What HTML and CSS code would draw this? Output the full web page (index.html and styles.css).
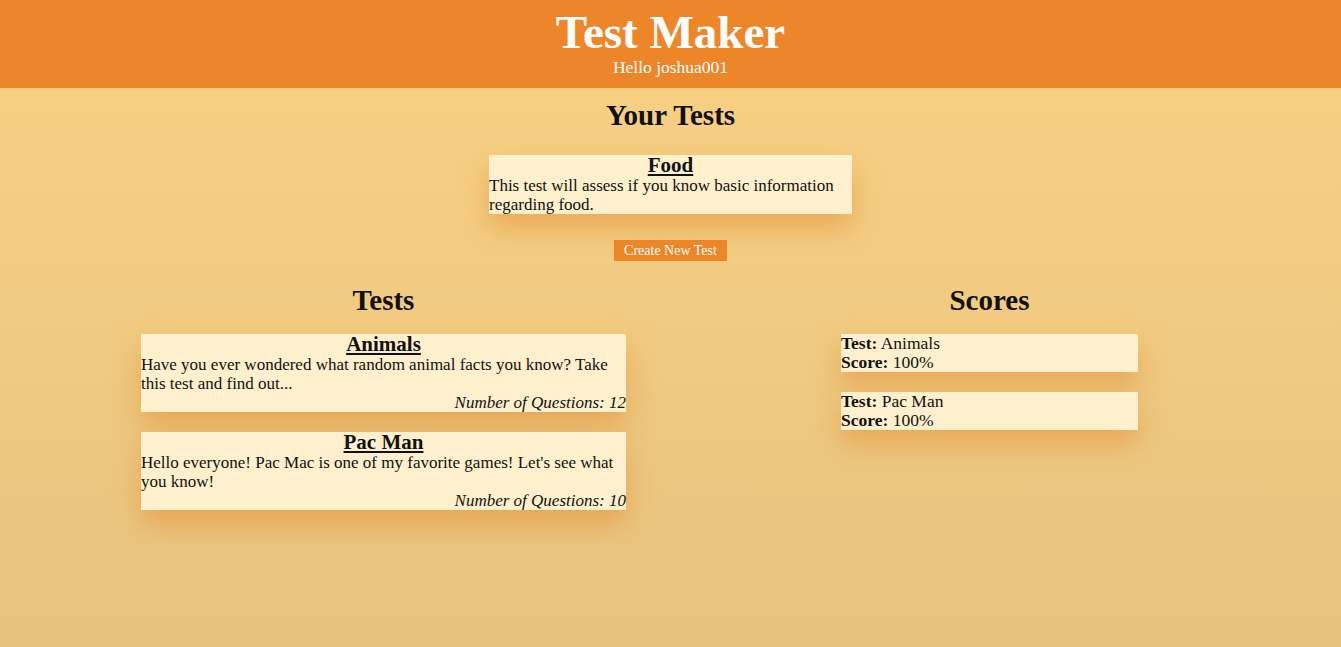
FILE: index.html
```html
<!DOCTYPE html>
<html>
<head>
<meta charset="utf-8">
<title>Test Maker</title>
<link rel="stylesheet" href="styles.css">
</head>
<body>
<header class="site-header">
  <h1 class="site-title">Test Maker</h1>
  <p class="greeting">Hello joshua001</p>
</header>
<main class="page">
  <section class="your-tests">
    <h2 class="section-title">Your Tests</h2>
    <div class="card food-card">
      <h3 class="card-title">Food</h3>
      <p class="card-text">This test will assess if you know basic information regarding food.</p>
    </div>
    <button class="create-btn">Create New Test</button>
  </section>
  <div class="columns">
    <section class="col tests-col">
      <h2 class="section-title">Tests</h2>
      <div class="card-list">
        <div class="card">
          <h3 class="card-title">Animals</h3>
          <p class="card-text">Have you ever wondered what random animal facts you know? Take this test and find out...</p>
          <p class="card-count">Number of Questions: 12</p>
        </div>
        <div class="card">
          <h3 class="card-title">Pac Man</h3>
          <p class="card-text">Hello everyone! Pac Mac is one of my favorite games! Let's see what you know!</p>
          <p class="card-count">Number of Questions: 10</p>
        </div>
      </div>
    </section>
    <section class="col scores-col">
      <h2 class="section-title">Scores</h2>
      <div class="card-list">
        <div class="card score-card">
          <p class="card-text"><b>Test:</b> Animals</p>
          <p class="card-text"><b>Score:</b> 100%</p>
        </div>
        <div class="card score-card">
          <p class="card-text"><b>Test:</b> Pac Man</p>
          <p class="card-text"><b>Score:</b> 100%</p>
        </div>
      </div>
    </section>
  </div>
</main>
</body>
</html>
```
FILE: styles.css
```css
html, body {
  margin: 0;
  padding: 0;
}
body {
  font-family: "Liberation Serif", "Times New Roman", serif;
  color: #111;
  min-height: 647px;
  background: linear-gradient(to bottom, #f8d184 0%, #f3cc82 40%, #e6c27e 100%);
}
.site-header {
  background: #ed8529;
  color: #fff;
  text-align: center;
  padding: 5px 0 12px;
}
.site-title {
  margin: 0;
  font-size: 47px;
  line-height: 54px;
  font-weight: bold;
}
.greeting {
  margin: 0;
  font-size: 17.5px;
  line-height: 17px;
}
.page {
  display: flex;
  flex-direction: column;
}
.your-tests {
  display: flex;
  flex-direction: column;
  align-items: center;
  padding-top: 13px;
}
.section-title {
  margin: 0;
  font-size: 29px;
  line-height: 28px;
  font-weight: bold;
  text-align: center;
}
.card {
  background: #fef0cc;
  box-shadow: 0 14px 28px rgba(226, 146, 60, 0.6);
}
.food-card {
  width: 363px;
  margin-top: 26px;
}
.card-title {
  margin: 0;
  font-size: 21px;
  line-height: 21px;
  font-weight: bold;
  text-align: center;
  text-decoration: underline;
}
.card-text {
  margin: 0;
  font-size: 17px;
  line-height: 19px;
}
.score-card .card-text {
  font-size: 17.5px;
}
.card-count {
  margin: 0;
  font-size: 17px;
  line-height: 19px;
  font-style: italic;
  text-align: right;
}
.create-btn {
  margin-top: 26px;
  height: 21px;
  width: 113px;
  padding: 0;
  border: none;
  background: #ed8529;
  color: #fff;
  font-family: "Liberation Serif", "Times New Roman", serif;
  font-size: 14px;
  line-height: 21px;
}
.columns {
  display: flex;
  padding-left: 141px;
  gap: 215px;
  margin-top: 25px;
}
.tests-col {
  width: 485px;
}
.scores-col {
  width: 297px;
}
.card-list {
  display: flex;
  flex-direction: column;
  gap: 20px;
  margin-top: 20px;
}
```
